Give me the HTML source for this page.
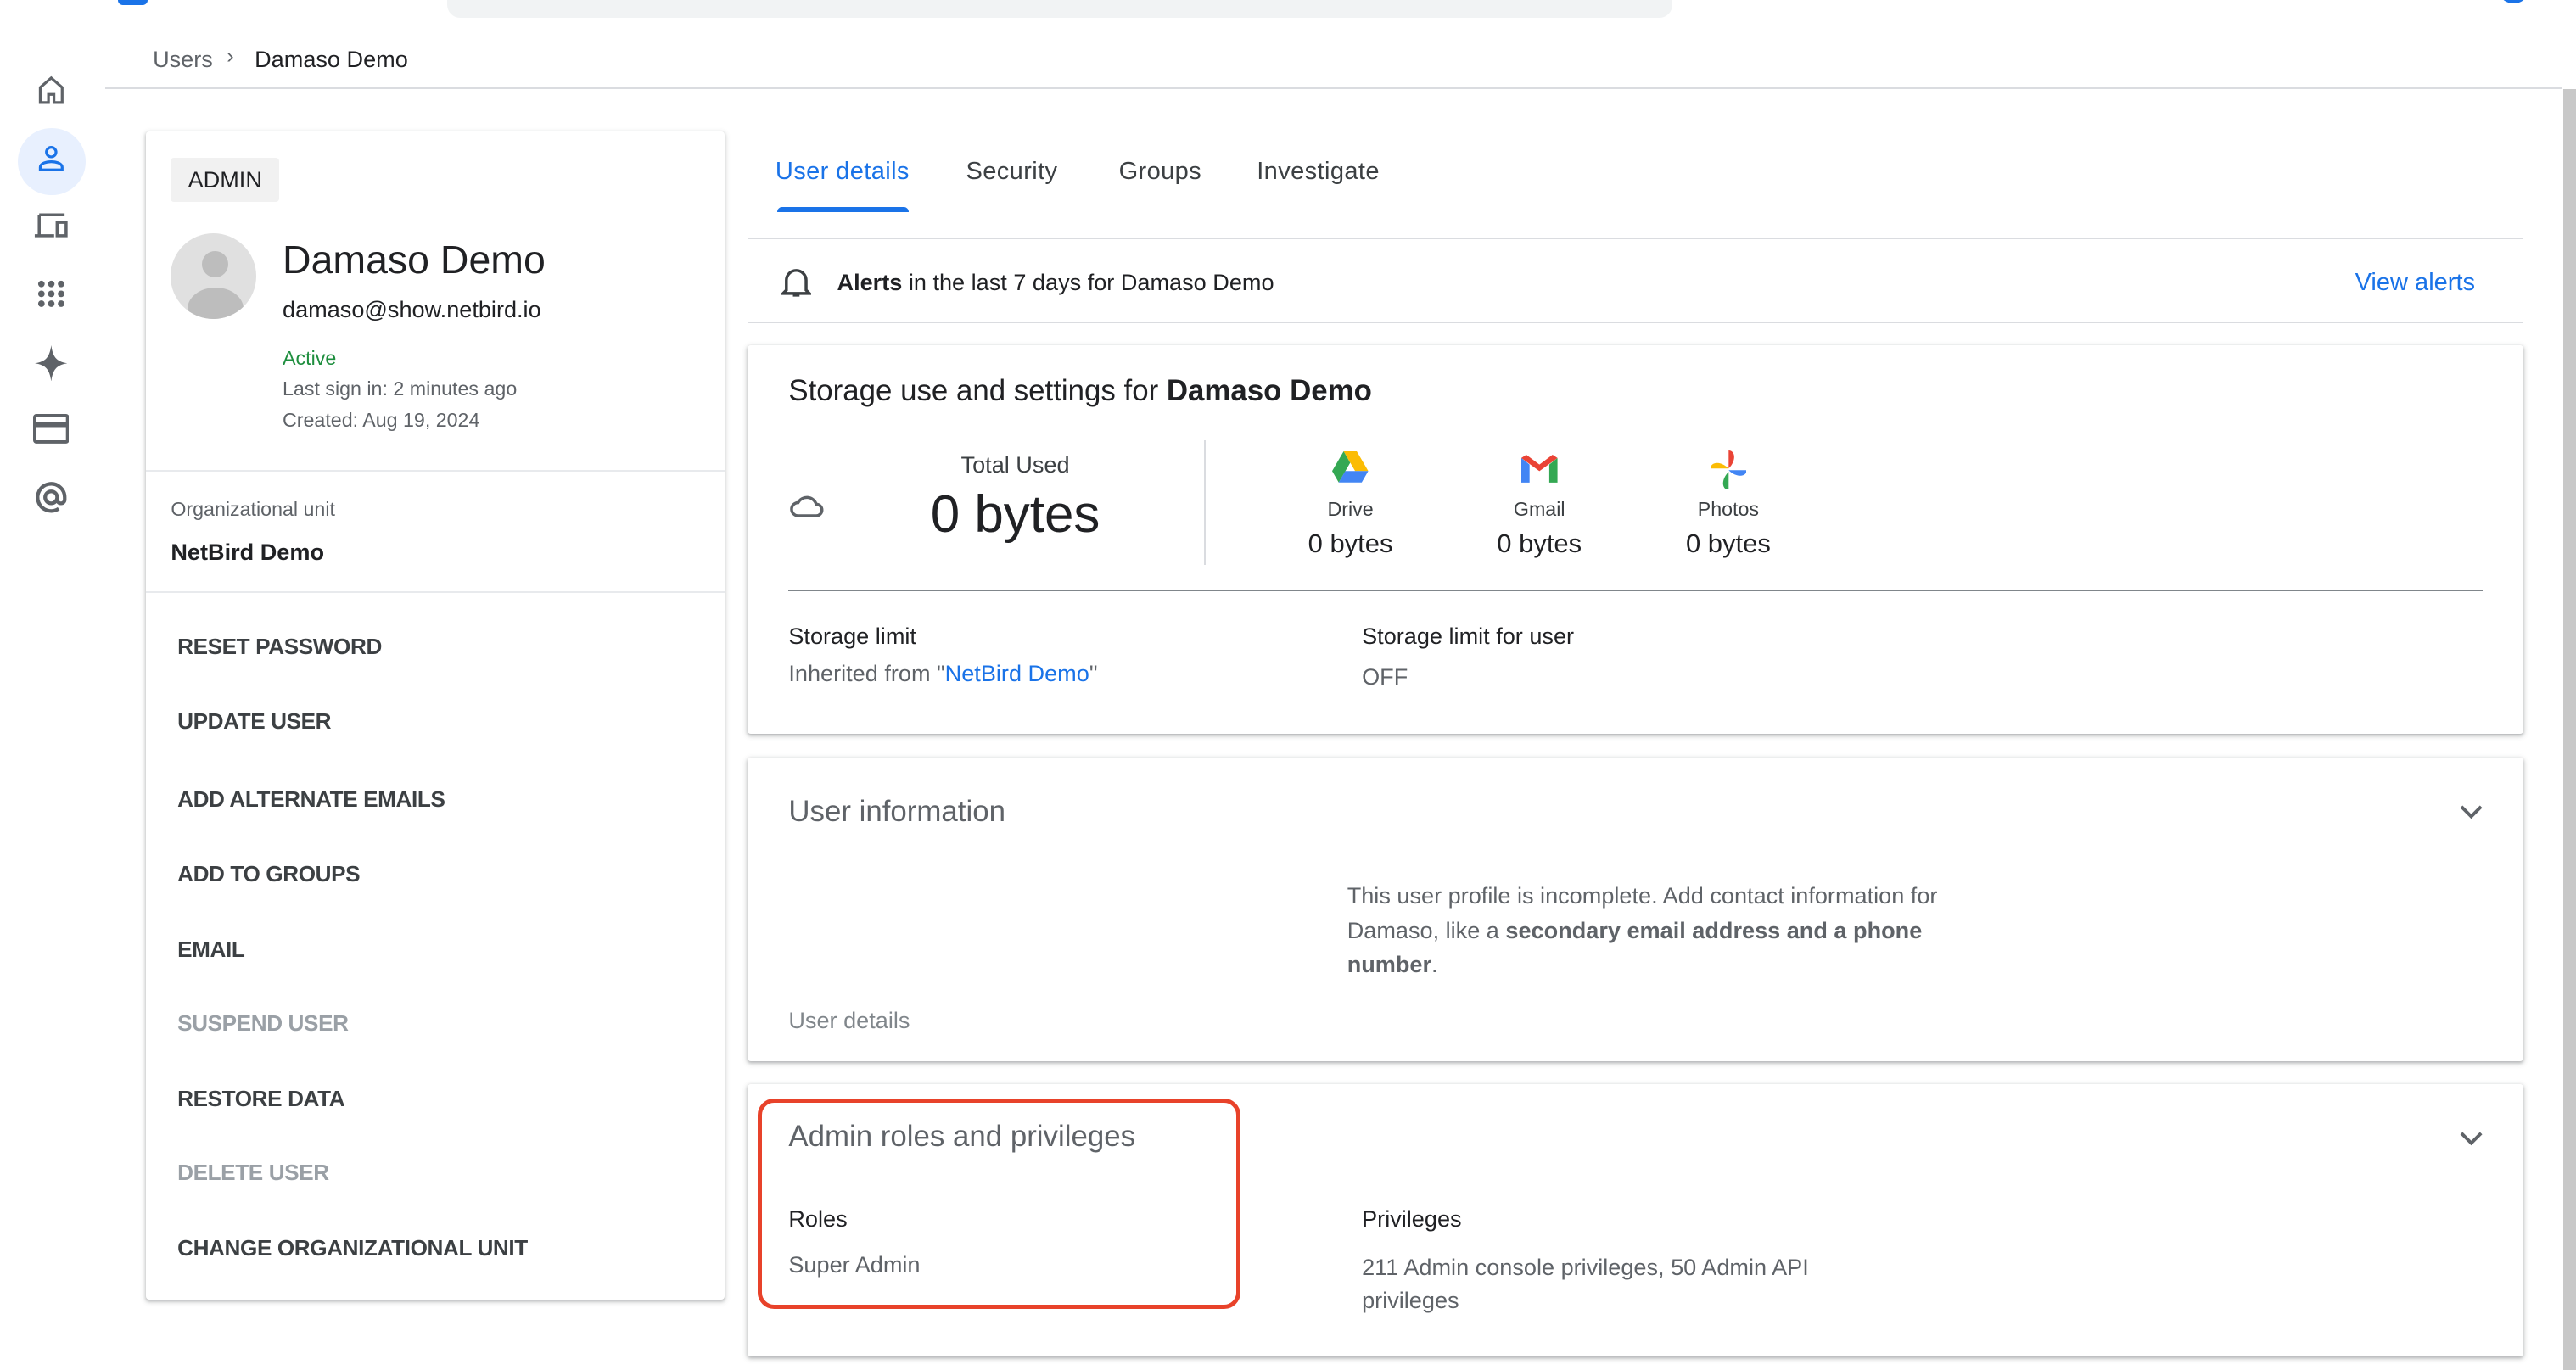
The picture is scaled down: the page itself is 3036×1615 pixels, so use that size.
<!DOCTYPE html>
<html><head><meta charset="utf-8"><style>
html,body{margin:0;padding:0;background:#fff;}
body{width:1568px;height:834px;zoom:1.93622;position:relative;overflow:hidden;font-family:"Liberation Sans",Arial,sans-serif;color:#202124;}
.a{position:absolute;}
.card{position:absolute;background:#fff;box-shadow:0 1px 2px rgba(60,64,67,.3),0 1px 3px 1px rgba(60,64,67,.12);border-radius:2px;}
.g{color:#5f6368}
.menu div{position:absolute;left:19px;font-size:13.5px;font-weight:bold;color:#3c4043;letter-spacing:-0.2px}
.menu .dis{color:#9aa0a6}
svg{position:absolute}
</style></head><body>
<div class="a" style="left:272px;top:-8px;width:746px;height:19px;background:#f1f3f4;border-radius:8px"></div>
<div class="a" style="left:72px;top:-6px;width:18px;height:9px;background:#1a73e8;border-radius:3px"></div>
<div class="a" style="left:1522px;top:-10px;width:16px;height:12px;background:#1a73e8;border-radius:50%"></div>
<div class="a" style="left:1560px;top:54px;width:8px;height:780px;background:#c8c8c8"></div>

<div class="a g" style="left:93px;top:28px;font-size:14px">Users</div>
<div class="a g" style="left:138px;top:27px;font-size:13px">›</div>
<div class="a" style="left:155px;top:28px;font-size:14px">Damaso Demo</div>
<div class="a" style="left:64px;top:53px;width:1496px;height:1px;background:#dadce0"></div>

<svg style="left:21px;top:45px" width="20" height="20" viewBox="0 0 24 24"><path d="M4 21V10l8-7 8 7v11h-6v-6h-4v6z" fill="none" stroke="#5f6368" stroke-width="2"/></svg>
<div class="a" style="left:11px;top:78px;width:41px;height:41px;border-radius:50%;background:#e8f0fe"></div>
<svg style="left:21px;top:87px" width="20" height="20" viewBox="0 0 24 24"><circle cx="12" cy="7" r="3.5" fill="none" stroke="#1a73e8" stroke-width="2"/><path d="M4 20v-2c0-3 5-4 8-4s8 1 8 4v2z" fill="none" stroke="#1a73e8" stroke-width="2"/></svg>
<svg style="left:20px;top:128px" width="22" height="20" viewBox="0 0 24 22"><path d="M4 3h17M4 3v14M1 17h13M16 8h6v9h-6z" fill="none" stroke="#5f6368" stroke-width="2"/></svg>
<svg style="left:22px;top:170px" width="18" height="18" viewBox="0 0 18 18" fill="#5f6368"><circle cx="3" cy="3" r="2"/><circle cx="9" cy="3" r="2"/><circle cx="15" cy="3" r="2"/><circle cx="3" cy="9" r="2"/><circle cx="9" cy="9" r="2"/><circle cx="15" cy="9" r="2"/><circle cx="3" cy="15" r="2"/><circle cx="9" cy="15" r="2"/><circle cx="15" cy="15" r="2"/></svg>
<svg style="left:21px;top:210px" width="20" height="22" viewBox="0 0 20 22"><path d="M10 0C11 7 13 10 20 11 13 12 11 15 10 22 9 15 7 12 0 11 7 10 9 7 10 0z" fill="#5f6368"/></svg>
<svg style="left:20px;top:252px" width="22" height="18" viewBox="0 0 22 18"><rect x="1" y="1" width="20" height="16" rx="1" fill="none" stroke="#5f6368" stroke-width="2"/><rect x="1" y="5" width="20" height="3" fill="#5f6368"/></svg>
<svg style="left:20px;top:292px" width="22" height="22" viewBox="0 0 24 24"><path d="M16 12a4 4 0 1 1-8 0 4 4 0 0 1 8 0v1.5a2.5 2.5 0 0 0 5 0V12a9 9 0 1 0-4 7.5" fill="none" stroke="#5f6368" stroke-width="2.4"/></svg>

<div class="card" style="left:89px;top:80px;width:352px;height:711px">
  <div class="a" style="left:15px;top:16px;width:66px;height:27px;background:#f1f1f1;border-radius:2px;font-size:14px;line-height:27px;text-align:center">ADMIN</div>
  <div class="a" style="left:15px;top:62px;width:52px;height:52px;border-radius:50%;background:#e0e0e0;overflow:hidden">
    <div class="a" style="left:19px;top:11px;width:16px;height:16px;border-radius:50%;background:#bdbdbd"></div>
    <div class="a" style="left:10px;top:33px;width:34px;height:26px;border-radius:50% 50% 0 0;background:#bdbdbd"></div>
  </div>
  <div class="a" style="left:83px;top:64px;font-size:24px">Damaso Demo</div>
  <div class="a" style="left:83px;top:100px;font-size:14px">damaso@show.netbird.io</div>
  <div class="a" style="left:83px;top:131px;font-size:12px;color:#1e8e3e">Active</div>
  <div class="a g" style="left:83px;top:150px;font-size:12px">Last sign in: 2 minutes ago</div>
  <div class="a g" style="left:83px;top:169px;font-size:12px">Created: Aug 19, 2024</div>
  <div class="a" style="left:0;top:206px;width:352px;height:1px;background:#e8eaed"></div>
  <div class="a g" style="left:15px;top:223px;font-size:12px">Organizational unit</div>
  <div class="a" style="left:15px;top:248px;font-size:14px;font-weight:bold">NetBird Demo</div>
  <div class="a" style="left:0;top:280px;width:352px;height:1px;background:#e8eaed"></div>
  <div class="menu">
    <div style="top:306px">RESET PASSWORD</div>
    <div style="top:351px">UPDATE USER</div>
    <div style="top:399px">ADD ALTERNATE EMAILS</div>
    <div style="top:444px">ADD TO GROUPS</div>
    <div style="top:490px">EMAIL</div>
    <div class="dis" style="top:535px">SUSPEND USER</div>
    <div style="top:581px">RESTORE DATA</div>
    <div class="dis" style="top:626px">DELETE USER</div>
    <div style="top:672px">CHANGE ORGANIZATIONAL UNIT</div>
  </div>
</div>

<div class="a" style="left:472px;top:96px;font-size:15px;color:#1a73e8;letter-spacing:.2px">User details</div>
<div class="a" style="left:473px;top:126px;width:80px;height:3px;background:#1a73e8;border-radius:3px 3px 0 0"></div>
<div class="a" style="left:588px;top:96px;font-size:15px;color:#3c4043;letter-spacing:.2px">Security</div>
<div class="a" style="left:681px;top:96px;font-size:15px;color:#3c4043;letter-spacing:.2px">Groups</div>
<div class="a" style="left:765px;top:96px;font-size:15px;color:#3c4043;letter-spacing:.2px">Investigate</div>

<div class="a" style="left:455px;top:145px;width:1081px;height:52px;border:1px solid #dadce0;box-sizing:border-box">
  <svg style="left:20px;top:16px" width="18" height="20" viewBox="0 0 18 20"><path d="M3 15V9a6 6 0 0 1 12 0v6l2 2H1zM7 18h4" fill="none" stroke="#3c4043" stroke-width="1.8"/></svg>
  <div class="a" style="left:54px;top:18px;font-size:14px"><b>Alerts</b> in the last 7 days for Damaso Demo</div>
  <div class="a" style="left:978px;top:18px;font-size:15px;color:#1a73e8">View alerts</div>
</div>

<div class="card" style="left:455px;top:210px;width:1081px;height:237px">
  <div class="a" style="left:25px;top:18px;font-size:18px">Storage use and settings for <b>Damaso Demo</b></div>
  <svg style="left:26px;top:88px" width="22" height="18" viewBox="0 0 22 18"><path d="M5 16a4 4 0 0 1 0-8 6 6 0 0 1 11 1 3.5 3.5 0 0 1 0 7z" fill="none" stroke="#5f6368" stroke-width="1.8"/></svg>
  <div class="a" style="left:83px;top:65px;width:160px;text-align:center;font-size:14px;color:#3c4043">Total Used</div>
  <div class="a" style="left:83px;top:85px;width:160px;text-align:center;font-size:32px">0 bytes</div>
  <div class="a" style="left:278px;top:58px;width:1px;height:76px;background:#dadce0"></div>
  <svg style="left:356px;top:65px" width="22" height="20" viewBox="0 0 22 20"><path d="M7 0h8l7 12h-8z" fill="#fbbc04"/><path d="M7 0l4 7-7 12L0 12z" fill="#34a853"/><path d="M4 19l4-7h14l-4 7z" fill="#4285f4"/></svg>
  <svg style="left:471px;top:67px" width="22" height="17" viewBox="0 0 22 17"><path d="M0 2v15h5V6z" fill="#4285f4"/><path d="M17 6v11h5V2z" fill="#34a853"/><path d="M0 2l11 8 11-8-3-2-8 6-8-6z" fill="#ea4335"/></svg>
  <svg style="left:586px;top:64px" width="22" height="24" viewBox="0 0 22 24"><path d="M11 0c4 0 5 6 0 11z" fill="#ea4335"/><path d="M22 12c0 4-6 5-11 0z" fill="#4285f4"/><path d="M11 24c-4 0-5-6 0-11z" fill="#34a853"/><path d="M0 11c0-4 6-5 11 0z" fill="#fbbc04"/></svg>
  <div class="a" style="left:317px;top:93px;width:100px;text-align:center;font-size:12px;color:#3c4043">Drive</div>
  <div class="a" style="left:317px;top:112px;width:100px;text-align:center;font-size:16px">0 bytes</div>
  <div class="a" style="left:432px;top:93px;width:100px;text-align:center;font-size:12px;color:#3c4043">Gmail</div>
  <div class="a" style="left:432px;top:112px;width:100px;text-align:center;font-size:16px">0 bytes</div>
  <div class="a" style="left:547px;top:93px;width:100px;text-align:center;font-size:12px;color:#3c4043">Photos</div>
  <div class="a" style="left:547px;top:112px;width:100px;text-align:center;font-size:16px">0 bytes</div>
  <div class="a" style="left:25px;top:149px;width:1031px;height:1px;background:#80868b"></div>
  <div class="a" style="left:25px;top:169px;font-size:14px">Storage limit</div>
  <div class="a g" style="left:25px;top:192px;font-size:14px">Inherited from "<span style="color:#1a73e8">NetBird Demo</span>"</div>
  <div class="a" style="left:374px;top:169px;font-size:14px">Storage limit for user</div>
  <div class="a g" style="left:374px;top:194px;font-size:14px">OFF</div>
</div>

<div class="card" style="left:455px;top:461px;width:1081px;height:185px">
  <div class="a g" style="left:25px;top:23px;font-size:18px">User information</div>
  <svg style="left:1042px;top:28px" width="14" height="10" viewBox="0 0 14 10"><path d="M1 2l6 6 6-6" fill="none" stroke="#5f6368" stroke-width="2"/></svg>
  <div class="a g" style="left:365px;top:74px;width:360px;font-size:14px;line-height:21px">This user profile is incomplete. Add contact information for Damaso, like a <b>secondary email address and a phone number</b>.</div>
  <div class="a" style="left:25px;top:152px;font-size:14px;color:#80868b">User details</div>
</div>

<div class="card" style="left:455px;top:660px;width:1081px;height:166px">
  <div class="a g" style="left:25px;top:22px;font-size:18px">Admin roles and privileges</div>
  <svg style="left:1042px;top:28px" width="14" height="10" viewBox="0 0 14 10"><path d="M1 2l6 6 6-6" fill="none" stroke="#5f6368" stroke-width="2"/></svg>
  <div class="a" style="left:25px;top:74px;font-size:14px">Roles</div>
  <div class="a g" style="left:25px;top:102px;font-size:14px">Super Admin</div>
  <div class="a" style="left:374px;top:74px;font-size:14px">Privileges</div>
  <div class="a g" style="left:374px;top:102px;width:300px;font-size:14px;line-height:20px">211 Admin console privileges, 50 Admin API privileges</div>
</div>
<div class="a" style="left:461px;top:669px;width:294px;height:128px;border:3px solid #e8422a;border-radius:10px;box-sizing:border-box"></div>
</body></html>
